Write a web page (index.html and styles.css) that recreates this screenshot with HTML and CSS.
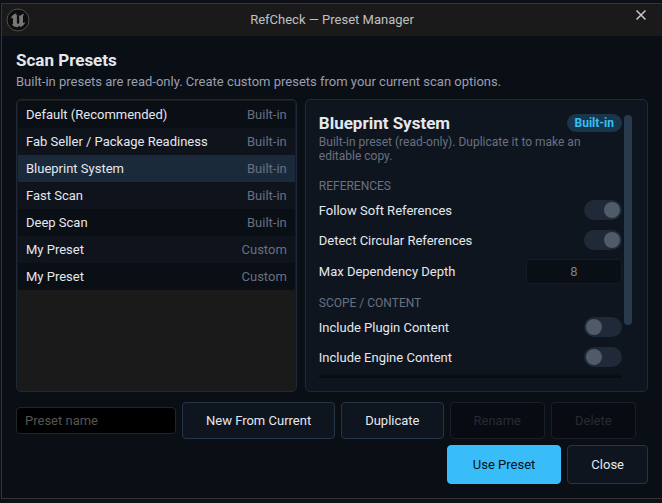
FILE: index.html
```html
<!DOCTYPE html>
<html lang="en">
<head>
    <meta charset="UTF-8">
    <meta name="viewport" content="width=device-width, initial-scale=1.0">
    <title>RefCheck — Preset Manager</title>
    <link rel="stylesheet" href="styles.css">
</head>
<body>
    <div class="window">
        <header class="titlebar">
            <svg class="logo" viewBox="0 0 24 24" aria-hidden="true">
                <circle cx="12" cy="12" r="11" fill="#0d0d0d" stroke="#505050" stroke-width="1"/>
                <path fill="#747976" d="M11 5C7.800 5.800 5.200 8 4.400 11c.9-1 1.600-1.300 2.100-1.100.5.200.5.800.5 1.400v4c0 .8-.5 1.200-1.200 1.200 1.400 1.800 3.500 2.700 5.800 2.800l1.400-1.500 1.500 1.200c2.300-.9 4-2.600 4.900-5-.9.8-1.700 1.200-2.100.9-.3-.2-.3-.8-.3-1.200V8.600c0-1.200.7-2.100 1.600-3-2 .4-3.400 1.200-4.500 2.400-.5-.5-1.100-.6-1.700-.5.6.4.8.8.8 1.500v5.700c0 .6-.5 1.100-1.100 1.100-.8 0-1.200-.5-1.200-1.300V7.600c0-1-.7-1.200-1.500-.9.3-.7.8-1.300 1.600-1.700z"/>
            </svg>
            <h1 class="titlebar-text">RefCheck — Preset Manager</h1>
            <button class="close-x" aria-label="Close window">
                <svg viewBox="0 0 10 10" width="10" height="10">
                    <path d="M0.500 0.500L9.500 9.500M9.500 0.500L0.500 9.500" stroke="#c8c8c8" stroke-width="1.500" fill="none"/>
                </svg>
            </button>
        </header>

        <main class="content">
            <h2 class="heading">Scan Presets</h2>
            <p class="subheading">Built-in presets are read-only. Create custom presets from your current scan options.</p>

            <div class="panels">
                <div class="panel preset-list">
                    <button class="preset"><span>Default (Recommended)</span><span class="kind">Built-in</span></button>
                    <button class="preset"><span>Fab Seller / Package Readiness</span><span class="kind">Built-in</span></button>
                    <button class="preset selected"><span>Blueprint System</span><span class="kind">Built-in</span></button>
                    <button class="preset"><span>Fast Scan</span><span class="kind">Built-in</span></button>
                    <button class="preset"><span>Deep Scan</span><span class="kind">Built-in</span></button>
                    <button class="preset"><span>My Preset</span><span class="kind">Custom</span></button>
                    <button class="preset"><span>My Preset</span><span class="kind">Custom</span></button>
                </div>

                <div class="panel details">
                    <div class="details-body">
                        <div class="details-header">
                            <h3>Blueprint System</h3>
                            <span class="badge">Built-in</span>
                        </div>
                        <p class="details-note">Built-in preset (read-only). Duplicate it to make an editable copy.</p>

                        <h4 class="section-label">REFERENCES</h4>
                        <div class="option">
                            <label for="soft-refs">Follow Soft References</label>
                            <input type="checkbox" class="toggle" id="soft-refs" checked disabled>
                        </div>
                        <div class="option">
                            <label for="circular-refs">Detect Circular References</label>
                            <input type="checkbox" class="toggle" id="circular-refs" checked disabled>
                        </div>
                        <div class="option option-number">
                            <label for="max-depth">Max Dependency Depth</label>
                            <input type="text" class="number" id="max-depth" value="8" disabled>
                        </div>

                        <h4 class="section-label">SCOPE / CONTENT</h4>
                        <div class="option">
                            <label for="plugin-content">Include Plugin Content</label>
                            <input type="checkbox" class="toggle" id="plugin-content" disabled>
                        </div>
                        <div class="option">
                            <label for="engine-content">Include Engine Content</label>
                            <input type="checkbox" class="toggle" id="engine-content" disabled>
                        </div>
                        <div class="scroll-shadow"></div>
                    </div>
                    <div class="scrollbar"><div class="scrollbar-thumb"></div></div>
                </div>
            </div>

            <div class="actions">
                <input type="text" class="name-input" placeholder="Preset name" aria-label="Preset name">
                <button class="btn">New From Current</button>
                <button class="btn">Duplicate</button>
                <button class="btn" disabled>Rename</button>
                <button class="btn" disabled>Delete</button>
            </div>
            <div class="actions actions-end">
                <button class="btn btn-primary">Use Preset</button>
                <button class="btn">Close</button>
            </div>
        </main>
    </div>
</body>
</html>
```

FILE: styles.css
```css
* {
    margin: 0;
    padding: 0;
    box-sizing: border-box;
}

body {
    background: #0d1117;
    color: #e4e8ee;
    font-family: Roboto, "Liberation Sans", sans-serif;
    font-size: 13px;
    height: 100vh;
    padding: 3px 0 4px 1px;
}

button,
input {
    font: inherit;
    color: inherit;
}

.window {
    display: flex;
    flex-direction: column;
    height: 100%;
    background: #0a0e15;
    border: 1px solid #343434;
    border-right: none;
}

/* Title bar */
.titlebar {
    display: grid;
    grid-template-columns: 32px 1fr 32px;
    height: 32px;
    background: #1a1a1a;
}

.logo {
    width: 24px;
    height: 24px;
    margin: 4px;
}

.titlebar-text {
    font-size: 13px;
    font-weight: 400;
    line-height: 32px;
    text-align: center;
    color: #c0c0c0;
}

.close-x {
    display: flex;
    align-items: center;
    justify-content: center;
    width: 22px;
    height: 22px;
    background: none;
    border: none;
}

/* Content */
.content {
    display: flex;
    flex-direction: column;
    flex: 1;
    min-height: 0;
    padding: 14px;
}

.heading {
    font-size: 17px;
    line-height: 20px;
}

.subheading {
    margin: 3px 0 8px;
    line-height: 18px;
    color: #9a9fb0;
}

.panels {
    display: grid;
    grid-template-columns: 45fr 55fr;
    gap: 8px;
    flex: 1;
    min-height: 0;
    margin-bottom: 10px;
}

.panel {
    border: 1px solid #1f2937;
    border-radius: 5px;
    overflow: hidden;
}

/* Preset list */
.preset-list {
    padding: 1px;
    background: #1a1a1a;
}

.preset {
    display: flex;
    align-items: center;
    justify-content: space-between;
    width: 100%;
    height: 27px;
    padding: 0 8px;
    background: #0a0e15;
    border: none;
}

.preset:nth-child(even) {
    background: #0e131c;
}

.preset.selected {
    background: #1b2a3a;
}

.kind {
    color: #687082;
}

/* Preset details */
.details {
    display: flex;
    gap: 2px;
    padding: 13px;
    background: #0f151e;
}

.details-body {
    position: relative;
    flex: 1;
    overflow: hidden;
}

.details-header {
    display: flex;
    align-items: center;
    justify-content: space-between;
}

.details-header h3 {
    font-size: 17px;
    line-height: 20px;
}

.badge {
    padding: 0 8px;
    border-radius: 9px;
    background: #17364a;
    color: #38bdf8;
    font-size: 12px;
    font-weight: 700;
    line-height: 18px;
}

.details-note {
    margin: 2px 0 8px;
    font-size: 12px;
    line-height: 14px;
    color: #687082;
}

.section-label {
    padding: 8px 0 2px;
    font-size: 12px;
    font-weight: 400;
    line-height: 14px;
    color: #687082;
}

.option {
    display: flex;
    align-items: center;
    justify-content: space-between;
    height: 30px;
}

.option-number {
    height: 33px;
}

.toggle {
    appearance: none;
    width: 38px;
    height: 20px;
    padding: 2px;
    border-radius: 10px;
    background: #1f2937;
}

.toggle::before {
    content: "";
    display: block;
    width: 16px;
    height: 16px;
    border-radius: 50%;
    background: #505b69;
}

.toggle:checked::before {
    margin-left: auto;
}

.number {
    width: 96px;
    height: 25px;
    border: 1px solid #171d27;
    border-radius: 4px;
    background: #0a0e15;
    color: #787e87;
    text-align: center;
}

.scroll-shadow {
    position: absolute;
    left: 0;
    right: 0;
    bottom: 0;
    height: 5px;
    background: linear-gradient(rgba(8, 10, 13, 0), #080a0d);
}

.scrollbar {
    width: 8px;
    margin: 2px 2px 0 0;
}

.scrollbar-thumb {
    height: 80%;
    border-radius: 4px;
    background: #2a3a4d;
}

/* Actions */
.actions {
    display: flex;
    align-items: center;
    gap: 6px;
}

.actions-end {
    justify-content: flex-end;
    margin-top: 6px;
}

.name-input {
    width: 160px;
    height: 27px;
    padding: 0 8px;
    border: 1px solid #20262e;
    border-radius: 4px;
    background: #000;
}

.name-input::placeholder {
    color: #555;
}

.btn {
    height: 37px;
    padding: 0 23px;
    border: 1px solid #263448;
    border-radius: 4px;
    background: #0f151e;
}

.btn:disabled {
    border-color: #181f2a;
    background: #080b11;
    color: #252c35;
}

.actions-end .btn {
    height: 39px;
}

.actions-end .btn-primary {
    padding: 0 25px;
    border-color: #38bdf8;
    background: #38bdf8;
    color: #0a0e15;
}
```
